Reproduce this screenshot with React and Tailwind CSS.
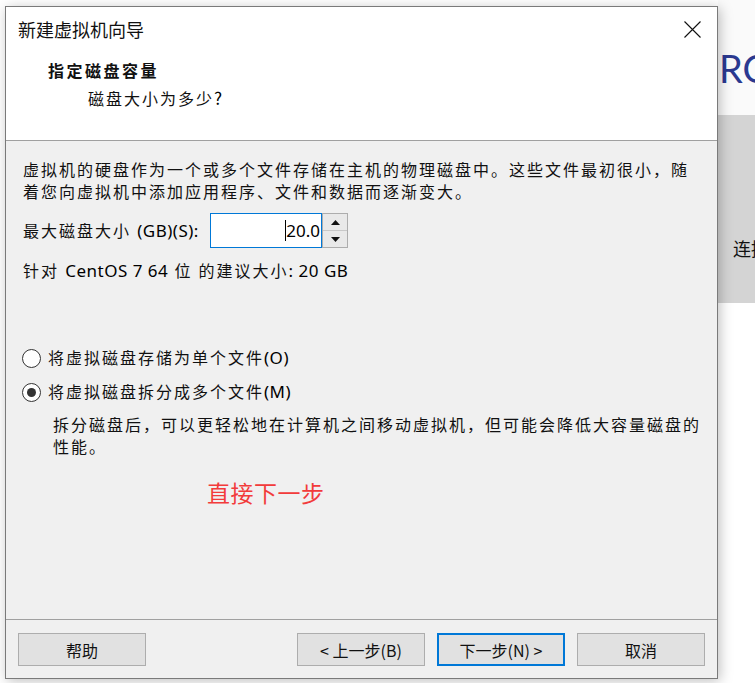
import React from 'react';

const body = { fontFamily: '"Noto Sans", "Noto Sans CJK SC", sans-serif' };
const cjk = { fontFamily: '"Noto Sans CJK SC", "Noto Sans", sans-serif' };

function CloseIcon() {
  return (
    <svg width="17" height="17" viewBox="0 0 17 17">
      <path d="M0.5 0.5 L16.5 16.5 M16.5 0.5 L0.5 16.5" stroke="#111" strokeWidth="1.1" fill="none" />
    </svg>
  );
}

function Radio({ checked }) {
  return (
    <span className="w-[19px] h-[19px] rounded-full border border-[#333] bg-white flex items-center justify-center shrink-0">
      {checked && <span className="w-[9px] h-[9px] rounded-full bg-[#333]" />}
    </span>
  );
}

function Spinner() {
  return (
    <div className="flex flex-col w-[26px] h-[35px] border border-[#adadad] bg-[#f0f0f0]">
      <div className="flex-1 flex items-center justify-center border-b border-[#c8c8c8] bg-[#e9e9e9]">
        <svg width="9" height="5" viewBox="0 0 9 5"><path d="M0 5 L4.5 0 L9 5 Z" fill="#111" /></svg>
      </div>
      <div className="flex-1 flex items-center justify-center bg-[#e9e9e9]">
        <svg width="9" height="5" viewBox="0 0 9 5"><path d="M0 0 L4.5 5 L9 0 Z" fill="#111" /></svg>
      </div>
    </div>
  );
}

function Button({ children, primary }) {
  return (
    <button
      className={
        primary
          ? 'w-[128px] h-[33px] bg-[#e1e1e1] border-2 border-[#0078d7] text-[16px] text-[#111] flex items-center justify-center'
          : 'w-[128px] h-[33px] bg-[#e1e1e1] border border-[#adadad] text-[16px] text-[#111] flex items-center justify-center'
      }
      style={cjk}
    >
      {children}
    </button>
  );
}

// latin runs inside the chinese text are a bit larger, like Tahoma on Windows
function Latin({ children }) {
  return <span className="text-[17px] tracking-[0.5px] text-black">{children}</span>;
}

export default function App() {
  return (
    <div className="relative w-[755px] h-[683px] overflow-hidden bg-white" style={body}>
      {/* page behind the wizard */}
      <div className="flex h-full">
        <div className="w-[718px] shrink-0" />
        <div className="flex-1 flex flex-col">
          <div className="h-[115px] bg-[#fafafa] pt-[44px] pl-[1px]">
            <span className="text-[38px] leading-[48px] text-[#2b3990] whitespace-nowrap" style={{ fontFamily: 'Lato, sans-serif' }}>RO</span>
          </div>
          <div className="h-[188px] bg-[#d4d4d4] pt-[120px] pl-[15px]">
            <span className="text-[18px] text-[#111] whitespace-nowrap" style={cjk}>连接</span>
          </div>
          <div className="flex-1 bg-white" />
        </div>
      </div>

      {/* wizard window */}
      <div className="absolute left-[5px] top-[6px] w-[713px] h-[673px] border border-[#7a7a7a] bg-[#f0f0f0] flex flex-col shadow-[2px_2px_12px_rgba(0,0,0,0.25)]">
        <div className="h-[134px] bg-white border-b border-[#a0a0a0] shrink-0">
          <div className="flex items-center justify-between pl-[12px] pr-[16px] pt-[10px] h-[34px]">
            <span className="text-[18px] leading-[24px] text-[#111]" style={cjk}>新建虚拟机向导</span>
            <CloseIcon />
          </div>
          <div className="pl-[42px] pt-[18px] text-[16px] leading-[22px] font-bold tracking-[2.5px] text-[#111]" style={cjk}>
            指定磁盘容量
          </div>
          <div className="pl-[82px] pt-[6px] text-[16px] leading-[22px] tracking-[2px] text-[#111]" style={cjk}>
            磁盘大小为多少<Latin>?</Latin>
          </div>
        </div>

        <div className="flex-1 border-b border-[#a0a0a0] pl-[17px] pt-[18px] text-[16px] leading-[22px] tracking-[2px] text-[#111]">
          <div className="whitespace-nowrap">虚拟机的硬盘作为一个或多个文件存储在主机的物理磁盘中。这些文件最初很小，随</div>
          <div className="whitespace-nowrap">着您向虚拟机中添加应用程序、文件和数据而逐渐变大。</div>

          <div className="flex items-center mt-[10px] h-[35px]">
            <span className="w-[187px] whitespace-nowrap">
              最大磁盘大小 <Latin>(GB)(S):</Latin>
            </span>
            <div className="w-[112px] h-[35px] bg-white border border-[#0078d7] flex items-center justify-end pr-[1px]">
              <span className="w-[1px] h-[21px] bg-black" />
              <span className="tracking-normal text-[17px] text-black">20.0</span>
            </div>
            <Spinner />
          </div>

          <div className="mt-[12px] whitespace-nowrap">
            针对 <Latin>CentOS 7 64</Latin> 位 的建议大小<Latin>: 20 GB</Latin>
          </div>

          <div className="mt-[65px] flex items-center gap-[7px] -ml-[1px] h-[22px]">
            <Radio />
            <span className="whitespace-nowrap">将虚拟磁盘存储为单个文件<Latin>(O)</Latin></span>
          </div>
          <div className="mt-[12px] flex items-center gap-[7px] -ml-[1px] h-[22px]">
            <Radio checked />
            <span className="whitespace-nowrap">将虚拟磁盘拆分成多个文件<Latin>(M)</Latin></span>
          </div>

          <div className="mt-[11px] pl-[30px]">
            <div className="whitespace-nowrap">拆分磁盘后，可以更轻松地在计算机之间移动虚拟机，但可能会降低大容量磁盘的</div>
            <div className="whitespace-nowrap">性能。</div>
          </div>

          <div className="mt-[19px] pl-[184px] text-[23px] leading-[30px] tracking-[0.5px] text-[#f23b3b] whitespace-nowrap" style={cjk}>
            直接下一步
          </div>
        </div>

        <div className="h-[58px] shrink-0 flex items-start justify-between pl-[12px] pr-[12px] pt-[13px]">
          <Button>帮助</Button>
          <div className="flex gap-[12px]">
            <Button>&lt; 上一步(B)</Button>
            <Button primary>下一步(N) &gt;</Button>
            <Button>取消</Button>
          </div>
        </div>
      </div>
    </div>
  );
}
